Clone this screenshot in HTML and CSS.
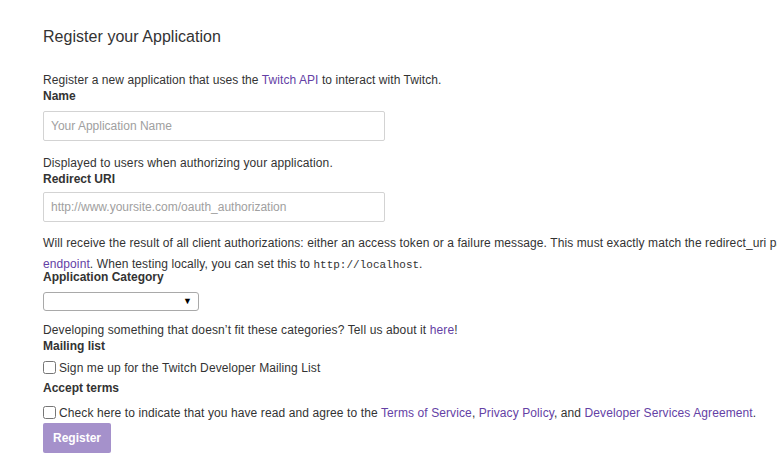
FILE: index.html
```html
<!DOCTYPE html>
<html>
<head>
<meta charset="utf-8">
<link rel="stylesheet" href="styles.css">
</head>
<body>
<div class="page">
  <h1 class="title">Register your Application</h1>
  <form class="form">
    <p class="intro">Register a new application that uses the <a href="#">Twitch API</a> to interact with Twitch.</p>
    <label class="label">Name</label>
    <input class="field" type="text" placeholder="Your Application Name">
    <p class="help">Displayed to users when authorizing your application.</p>
    <label class="label">Redirect URI</label>
    <input class="field field-second" type="text" placeholder="http://www.yoursite.com/oauth_authorization">
    <p class="help wide">Will receive the result of all client authorizations: either an access token or a failure message. This must exactly match the redirect_uri parameter passed to the authorization<br><a href="#">endpoint</a>. When testing locally, you can set this to <code class="code">http://localhost</code>.</p>
    <label class="label">Application Category</label>
    <div class="select-wrap">
      <select class="select"><option></option></select>
      <span class="arrow">▼</span>
    </div>
    <p class="help after-select">Developing something that doesn’t fit these categories? Tell us about it <a href="#">here</a>!</p>
    <label class="label">Mailing list</label>
    <label class="check"><input type="checkbox" class="box">Sign me up for the Twitch Developer Mailing List</label>
    <label class="label label-gap">Accept terms</label>
    <label class="check check-terms"><input type="checkbox" class="box">Check here to indicate that you have read and agree to the <a href="#">Terms of Service</a>, <a href="#">Privacy Policy</a>, and <a href="#">Developer Services Agreement</a>.</label>
    <button class="btn" type="button">Register</button>
  </form>
</div>
</body>
</html>
```
FILE: styles.css
```css
html, body {
  margin: 0;
  padding: 0;
  background: #fff;
}
body {
  font-family: "Liberation Sans", Arial, sans-serif;
  font-size: 12px;
  line-height: 16px;
  color: #333;
  overflow: hidden;
}
a {
  color: #6441a5;
  text-decoration: none;
}
.page {
  padding: 0 43px;
  width: 1200px;
}
.title {
  font-size: 16px;
  font-weight: normal;
  line-height: 20px;
  margin: 27px 0 0;
  color: #333;
  letter-spacing: 0.04px;
}
.form {
  display: flex;
  flex-direction: column;
  align-items: flex-start;
  margin-top: 25px;
}
.intro {
  margin: 0;
  letter-spacing: 0.07px;
}
.label {
  font-weight: bold;
  display: block;
}
.field {
  box-sizing: border-box;
  width: 342px;
  height: 30px;
  margin-top: 7px;
  padding: 0 7px;
  border: 1px solid #d3d3d3;
  border-radius: 2px;
  font-family: "Liberation Sans", Arial, sans-serif;
  font-size: 12px;
  color: #333;
  outline: none;
}
.field-second {
  margin-top: 5px;
}
.field::placeholder {
  color: #a0a0a0;
}
.help {
  margin: 14px 0 0;
  letter-spacing: 0.12px;
}
.wide {
  line-height: 21px;
  margin-top: 11px;
  margin-bottom: -7px;
  white-space: nowrap;
  letter-spacing: 0.1px;
}
.code {
  font-family: "Liberation Mono", "Courier New", monospace;
  font-size: 11px;
  color: #333;
  letter-spacing: 0;
}
.select-wrap {
  position: relative;
  margin-top: 7px;
}
.select {
  appearance: none;
  -webkit-appearance: none;
  box-sizing: border-box;
  width: 156px;
  height: 19px;
  border: 1px solid #a9a9a9;
  border-radius: 3px;
  background: #fff;
  display: block;
}
.arrow {
  position: absolute;
  right: 7px;
  top: 3px;
  font-size: 9px;
  line-height: 12px;
  color: #000;
  pointer-events: none;
}
.after-select {
  margin-top: 11px;
}
.check {
  display: block;
  margin-top: 6px;
  line-height: 16px;
  letter-spacing: 0.1px;
}
.box {
  margin: 0 3px 0 0;
  width: 13px;
  height: 13px;
  vertical-align: -2px;
}
.label-gap {
  margin-top: 4px;
}
.check-terms {
  margin-top: 9px;
}
.btn {
  margin-top: 2px;
  height: 30px;
  width: 68px;
  border: none;
  border-radius: 2px;
  background: #a591cb;
  color: #fff;
  font-family: "Liberation Sans", Arial, sans-serif;
  font-weight: bold;
  font-size: 12px;
  padding: 0;
}
```
